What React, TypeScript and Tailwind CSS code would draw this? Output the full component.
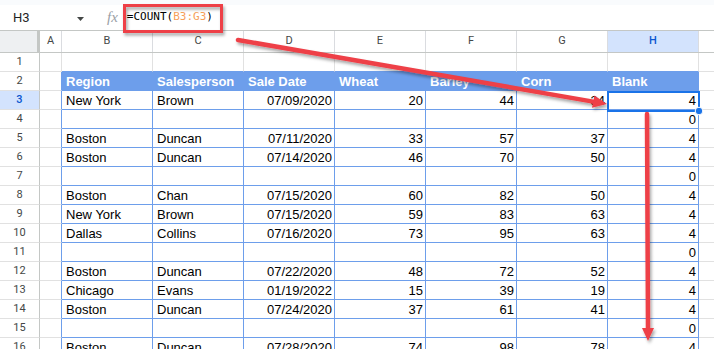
import React from "react";

const rows: string[][] = [
  [],
  ["Region", "Salesperson", "Sale Date", "Wheat", "Barley", "Corn", "Blank"],
  ["New York", "Brown", "07/09/2020", "20", "44", "34", "4"],
  ["", "", "", "", "", "", "0"],
  ["Boston", "Duncan", "07/11/2020", "33", "57", "37", "4"],
  ["Boston", "Duncan", "07/14/2020", "46", "70", "50", "4"],
  ["", "", "", "", "", "", "0"],
  ["Boston", "Chan", "07/15/2020", "60", "82", "50", "4"],
  ["New York", "Brown", "07/15/2020", "59", "83", "63", "4"],
  ["Dallas", "Collins", "07/16/2020", "73", "95", "63", "4"],
  ["", "", "", "", "", "", "0"],
  ["Boston", "Duncan", "07/22/2020", "48", "72", "52", "4"],
  ["Chicago", "Evans", "01/19/2022", "15", "39", "19", "4"],
  ["Boston", "Duncan", "07/24/2020", "37", "61", "41", "4"],
  ["", "", "", "", "", "", "0"],
  ["Boston", "Duncan", "07/28/2020", "74", "98", "78", "4"],
];

const letters = ["B", "C", "D", "E", "F", "G", "H"];

function ColumnHeaders() {
  return (
    <div className="flex h-[22px] border-b border-[#c4c7c5] text-[11px] text-[#444746] font-['Roboto',sans-serif]">
      <div className="w-[40px] shrink-0 bg-[#eef0f2] border-r-[3px] border-[#c4c7c5]" />
      <div className="w-[22px] shrink-0 border-r border-[#dadce0] flex items-center justify-center">A</div>
      {letters.map((l) => (
        <div
          key={l}
          className={
            "w-[91px] shrink-0 border-r border-[#dadce0] flex items-center justify-center " +
            (l === "H" ? "bg-[#d3e3fd] text-[#0b57d0] font-medium" : "")
          }
        >
          {l}
        </div>
      ))}
      <div className="flex-1" />
    </div>
  );
}

function SheetRow({ n, cells }: { n: number; cells: string[] }) {
  const inTable = n >= 2;
  const header = n === 2;
  return (
    <div className="flex h-[19px] text-[13px] font-['Liberation_Sans',Arial,sans-serif]">
      <div
        className={
          "w-[40px] shrink-0 border-r border-b border-r-[#c4c7c5] border-b-[#e1e1e1] flex items-center justify-center text-[11px] font-['Roboto',sans-serif] " +
          (n === 3 ? "bg-[#d3e3fd] text-[#0b57d0] font-medium" : "text-[#444746]")
        }
      >
        {n}
      </div>
      <div
        className={
          "w-[22px] shrink-0 border-r border-b border-b-[#e1e1e1] " +
          (inTable ? "border-r-[#6d9eeb]" : "border-r-[#e1e1e1]")
        }
      />
      {letters.map((l, i) => {
        const text = cells[i] ?? "";
        const right = !header && i >= 2;
        return (
          <div
            key={l}
            className={
              "w-[91px] shrink-0 border-r border-b flex items-end leading-[16px] whitespace-nowrap overflow-hidden " +
              (inTable ? "border-r-[#6d9eeb] " : "border-r-[#e1e1e1] ") +
              "border-b-[#6d9eeb] " +
              (header ? "bg-[#6d9eeb] text-white font-bold " : "text-black ") +
              (right ? "justify-end pr-[2px]" : "pl-[4px]")
            }
          >
            {text}
          </div>
        );
      })}
      <div className="flex-1 border-b border-[#e1e1e1]" />
    </div>
  );
}

function Overlay() {
  return (
    <svg className="absolute inset-0 pointer-events-none" width="714" height="349" viewBox="0 0 714 349">
      <defs>
        <filter id="sh" x="-10%" y="-10%" width="120%" height="130%">
          <feDropShadow dx="1.5" dy="2.5" stdDeviation="1.5" floodColor="#000" floodOpacity="0.35" />
        </filter>
      </defs>
      {/* selected cell H3 */}
      <rect x="608" y="92" width="91" height="19" fill="none" stroke="#1a73e8" strokeWidth="2" />
      <circle cx="699" cy="111" r="3.8" fill="#1a73e8" stroke="#fff" strokeWidth="1" />
      <g filter="url(#sh)">
        <rect x="124.5" y="5.5" width="97" height="26" fill="none" stroke="#ee3f47" strokeWidth="3" />
        <line x1="238" y1="40" x2="593" y2="101.6" stroke="#ee3f47" strokeWidth="4.5" strokeLinecap="round" />
        <polygon points="607,104 592,107.8 594.4,95.4" fill="#ee3f47" />
        <line x1="647" y1="114" x2="648" y2="329" stroke="#ee3f47" strokeWidth="4.5" strokeLinecap="round" />
        <polygon points="648,341 642,328 654,328" fill="#ee3f47" />
      </g>
    </svg>
  );
}

export default function App() {
  return (
    <div className="relative w-[714px] h-[349px] overflow-hidden bg-white">
      {/* top strip */}
      <div className="h-[5px] bg-[#f9fbfd]" />

      {/* formula bar */}
      <div className="h-[26px] flex items-center border-b border-[#c4c7c5]">
        <span className="w-[64px] pl-[13px] text-[13px] text-[#1f1f1f] font-['Roboto',sans-serif]">H3</span>
        <svg width="8" height="6" viewBox="0 0 8 6" className="ml-[13px] mt-[2px]">
          <polygon points="0,1 7,1 3.5,5" fill="#444746" />
        </svg>
        <span className="ml-[22px] text-[15px] italic text-[#9aa0a6] font-['Liberation_Serif',serif]">fx</span>
        <span className="ml-[9px] text-[11px] text-black font-['DejaVu_Sans_Mono',monospace]">
          =COUNT(<span className="text-[#f6a05a]">B3:G3</span>)
        </span>
      </div>

      <ColumnHeaders />
      {rows.map((cells, i) => (
        <SheetRow key={i} n={i + 1} cells={cells} />
      ))}

      <Overlay />
    </div>
  );
}
